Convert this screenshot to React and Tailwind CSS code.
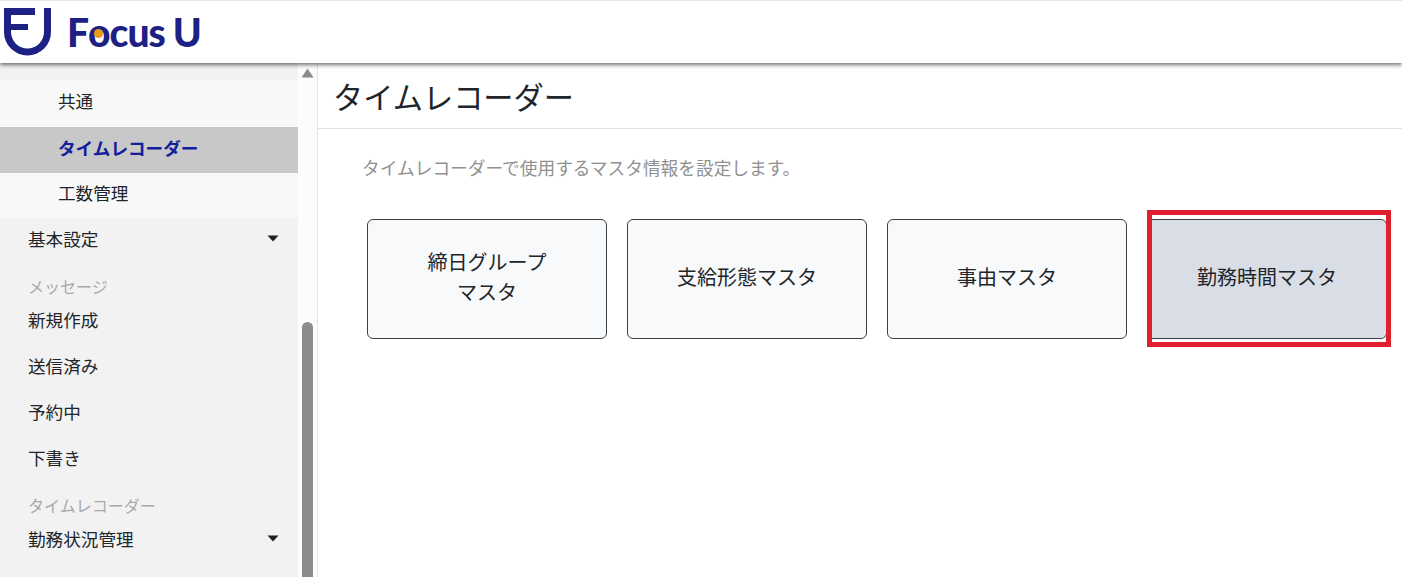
const font = { fontFamily: '"Noto Sans CJK JP", sans-serif' };

function Caret() {
  return (
    <svg width="12" height="7" viewBox="0 0 12 7" className="block">
      <path d="M0.5 0.5H11.5L6 6.5Z" fill="#1d2128" />
    </svg>
  );
}

function Item({ label, caret }) {
  return (
    <div className="flex h-[46px] items-center justify-between pb-[4px] pl-[28px] pr-[19px] text-[17.6px] text-[#212529]">
      <span>{label}</span>
      {caret && (
        <span className="-mt-[1px]">
          <Caret />
        </span>
      )}
    </div>
  );
}

function Heading({ label }) {
  return <div className="flex h-[35px] items-center pl-[28px] pt-[9px] text-[16px] text-[#a9a9a9]">{label}</div>;
}

function Tile({ children, active }) {
  return (
    <div
      className={
        "flex h-[120px] w-[240px] items-center justify-center rounded-[6px] border border-[#3c4046] pb-[4px] text-center text-[20px] leading-[30px] text-[#212529] " +
        (active ? "bg-[#d9dee6]" : "bg-[#f8f9fa]")
      }
    >
      {children}
    </div>
  );
}

export default function App() {
  return (
    <div className="flex h-[577px] w-[1402px] flex-col overflow-hidden bg-white" style={font}>
      <header className="relative z-10 flex h-[63px] shrink-0 items-center border-t border-[#efe3ea] bg-white shadow-[0_2px_4px_rgba(0,0,0,0.55)]">
        <svg width="56" height="62" viewBox="0 1 56 62" className="block shrink-0">
          <path
            fill="#1d2183"
            d="M4 8H35V15H11V24H28V30H11V32A16.5 16.5 0 0 0 44 32V8H51V32A23.5 23.5 0 0 1 4 32Z"
          />
        </svg>
        <div
          className="ml-[11px] flex items-baseline text-[39px] font-black leading-none tracking-[-1px] text-[#1d2183]"
          style={{ fontFamily: "Lato, sans-serif" }}
        >
          <span>F</span>
          <span className="relative">
            o
            <span className="absolute left-[6px] top-[16px] h-[9px] w-[9px] rounded-full bg-[#e89c1c]" />
          </span>
          <span>cus</span>
          <span className="ml-[8px]">U</span>
        </div>
      </header>

      <div className="flex min-h-0 flex-1">
        <aside className="flex w-[318px] shrink-0 border-r border-[#e4e4e4]">
          <nav className="w-[298px] shrink-0 bg-[#f2f2f2] pt-[17px]">
            <div className="bg-[#f8f8f8] text-[17.6px] text-[#212529]">
              <div className="flex h-[47px] items-center pb-[4px] pl-[58px]">共通</div>
              <div className="flex h-[46px] items-center bg-[#c8c8c8] pb-[4px] pl-[58px] font-bold text-[#10209a]">
                タイムレコーダー
              </div>
              <div className="flex h-[45px] items-center pb-[4px] pl-[58px]">工数管理</div>
            </div>
            <Item label="基本設定" caret />
            <Heading label="メッセージ" />
            <Item label="新規作成" />
            <Item label="送信済み" />
            <Item label="予約中" />
            <Item label="下書き" />
            <Heading label="タイムレコーダー" />
            <Item label="勤務状況管理" caret />
          </nav>
          <div className="flex flex-1 flex-col items-center bg-[#fcfcfc] pr-[1px] pt-[5px]">
            <svg width="13" height="10" viewBox="0 0 13 10" className="block">
              <path d="M6.5 0.5L12.5 9.5H0.5Z" fill="#8c8c8c" />
            </svg>
            <div className="mt-[244px] w-[11px] flex-1 rounded-t-[6px] bg-[#8c8c8c]" />
          </div>
        </aside>

        <main className="relative min-w-0 flex-1">
          <h1 className="flex h-[66px] items-center border-b border-[#dfe1e3] pl-[15px] pt-[2px] text-[30.2px] font-normal text-[#212529]">
            タイムレコーダー
          </h1>
          <p className="mt-[25px] pl-[44px] text-[17.7px] leading-[26px] text-[#909090]">
            タイムレコーダーで使用するマスタ情報を設定します。
          </p>
          <div className="mt-[39px] flex gap-[20px] pl-[49px]">
            <Tile>
              <span>
                締日グループ
                <br />
                マスタ
              </span>
            </Tile>
            <Tile>支給形態マスタ</Tile>
            <Tile>事由マスタ</Tile>
            <Tile active>勤務時間マスタ</Tile>
          </div>
          <div className="pointer-events-none absolute left-[829px] top-[147px] h-[137px] w-[244px] border-[5px] border-[#e0202e]" />
        </main>
      </div>
    </div>
  );
}
